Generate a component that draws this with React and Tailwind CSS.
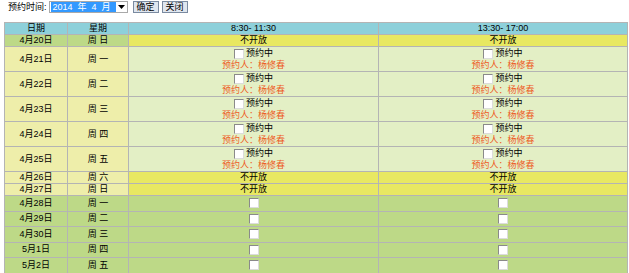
import React from 'react';

const rows = [
  { date: '4月20日', week: '周 日', type: 'sunday' },
  { date: '4月21日', week: '周 一', type: 'booked' },
  { date: '4月22日', week: '周 二', type: 'booked' },
  { date: '4月23日', week: '周 三', type: 'booked' },
  { date: '4月24日', week: '周 四', type: 'booked' },
  { date: '4月25日', week: '周 五', type: 'booked' },
  { date: '4月26日', week: '周 六', type: 'closed' },
  { date: '4月27日', week: '周 日', type: 'closed' },
  { date: '4月28日', week: '周 一', type: 'open' },
  { date: '4月29日', week: '周 二', type: 'open' },
  { date: '4月30日', week: '周 三', type: 'open' },
  { date: '5月1日', week: '周 四', type: 'open' },
  { date: '5月2日', week: '周 五', type: 'open' },
];

const Box = () => (
  <span className="inline-block w-[10px] h-[10px] bg-white border border-t-[#8a8a8a] border-l-[#8a8a8a] border-r-[#dcdcdc] border-b-[#dcdcdc] align-middle" />
);

const SlotCell = ({ type }) => {
  if (type === 'sunday' || type === 'closed') {
    return (
      <td className="border border-[#b4b4b4] bg-[#e8e862] text-center text-black">不开放</td>
    );
  }
  if (type === 'booked') {
    return (
      <td className="border border-[#b4b4b4] bg-[#e3efc5] text-center">
        <div className="flex items-center justify-center gap-[2px] h-[12px] text-black">
          <Box />
          <span>预约中</span>
        </div>
        <div className="h-[11px] leading-[11px] text-[#ee5a1e]">预约人：杨修春</div>
      </td>
    );
  }
  return (
    <td className="border border-[#b4b4b4] bg-[#bdd987] text-center">
      <div className="flex items-center justify-center">
        <Box />
      </div>
    </td>
  );
};

export default function App() {
  return (
    <div
      className="min-h-screen bg-white text-[9px] leading-[11px] text-black"
      style={{ fontFamily: '"Liberation Sans", "Noto Sans CJK SC", sans-serif' }}
    >
      <div className="flex items-center h-[13px] pl-[8px] pt-[1px]">
        <span className="mr-[2px]">预约时间:</span>
        <div className="flex items-center h-[12px] w-[79px] border border-[#a9a9a9] bg-white">
          <span className="flex-1 h-[10px] ml-[1px] bg-[#3399ff] text-white leading-[10px] pl-[2px] whitespace-nowrap overflow-hidden">2014&nbsp; 年&nbsp; 4&nbsp; 月</span>
          <span className="w-[11px] flex items-center justify-center">
            <svg width="7" height="4" viewBox="0 0 7 4"><path d="M0 0h7L3.5 4z" fill="#000" /></svg>
          </span>
        </div>
        <button className="ml-[5px] h-[12px] px-[3px] border border-[#7a8aa0] bg-[#dfe6ef] leading-[10px] text-[9px]">确定</button>
        <button className="ml-[3px] h-[12px] px-[3px] border border-[#7a8aa0] bg-[#dfe6ef] leading-[10px] text-[9px]">关闭</button>
      </div>

      <div className="px-[4px] pt-[9px]">
        <table className="w-[623px] border-collapse table-fixed">
          <colgroup>
            <col className="w-[63px]" />
            <col className="w-[61px]" />
            <col className="w-[250px]" />
            <col className="w-[249px]" />
          </colgroup>
          <thead>
            <tr className="h-[12px] bg-[#8dd0da]">
              <th className="border border-[#b4b4b4] font-normal">日期</th>
              <th className="border border-[#b4b4b4] font-normal">星期</th>
              <th className="border border-[#b4b4b4] font-normal">8:30- 11:30</th>
              <th className="border border-[#b4b4b4] font-normal">13:30- 17:00</th>
            </tr>
          </thead>
          <tbody>
            {rows.map((r) => {
              const h =
                r.type === 'booked' ? 'h-[25px]' : r.type === 'open' ? 'h-[15.5px]' : 'h-[12px]';
              const leftBg =
                r.type === 'sunday' || r.type === 'open' ? 'bg-[#bdd987]' : 'bg-[#eeeeaa]';
              return (
                <tr key={r.date} className={h}>
                  <td className={`border border-[#b4b4b4] text-center ${leftBg}`}>{r.date}</td>
                  <td className={`border border-[#b4b4b4] text-center ${leftBg}`}>{r.week}</td>
                  <SlotCell type={r.type} />
                  <SlotCell type={r.type} />
                </tr>
              );
            })}
          </tbody>
        </table>
      </div>
    </div>
  );
}
